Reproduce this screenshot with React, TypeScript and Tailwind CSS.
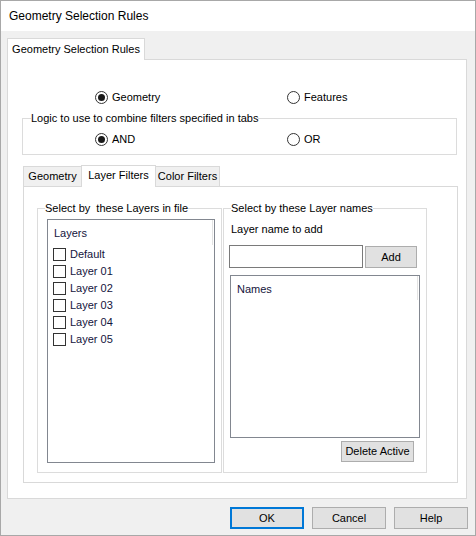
import React from "react";

function Radio({ checked, label }: { checked?: boolean; label: string }) {
  return (
    <div className="flex items-center h-[13px]">
      <svg width="13" height="13" viewBox="0 0 13 13" className="shrink-0">
        <circle cx="6.5" cy="6.5" r="6" fill="#ffffff" stroke="#333333" strokeWidth="1" />
        {checked && <circle cx="6.5" cy="6.5" r="3.5" fill="#1a1a1a" />}
      </svg>
      <span className="ml-[4px] leading-[13px]">{label}</span>
    </div>
  );
}

function Check({ label }: { label: string }) {
  return (
    <div className="flex items-center h-[17px] pl-[5px]">
      <span className="w-[13px] h-[13px] border border-[#333333] bg-white shrink-0" />
      <span className="ml-[4px] leading-[13px] text-[#14143c]">{label}</span>
    </div>
  );
}

function Button({ label, primary, className }: { label: string; primary?: boolean; className?: string }) {
  return (
    <button
      className={
        "flex items-center justify-center bg-[#e1e1e1] leading-[13px] " +
        (primary ? "border-2 border-[#0078d7] " : "border border-[#adadad] ") +
        (className ?? "")
      }
    >
      {label}
    </button>
  );
}

const layers = ["Default", "Layer 01", "Layer 02", "Layer 03", "Layer 04", "Layer 05"];

export default function App() {
  return (
    <div
      className="w-[476px] h-[536px] border border-[#a8a8a8] bg-[#f0f0f0] flex flex-col text-[11px] text-black"
      style={{ fontFamily: '"Liberation Sans", Arial, sans-serif' }}
    >
      {/* title bar */}
      <div className="h-[30px] bg-white flex items-center pl-[8px] text-[12px]">
        Geometry Selection Rules
      </div>

      <div className="flex flex-col pt-[7px] pl-[6px]">
        {/* outer tab strip */}
        <div className="flex h-[21px]">
          <div className="relative z-10 w-[138px] h-[22px] bg-white border-t border-l border-r border-[#d9d9d9] flex items-center justify-center leading-[13px] pb-[1px]">
            Geometry Selection Rules
          </div>
        </div>

        {/* outer tab page */}
        <div className="w-[460px] h-[440px] bg-white border border-[#d9d9d9] flex flex-col pt-[31px]">
          <div className="flex ml-[87px]">
            <div className="w-[192px]">
              <Radio checked label="Geometry" />
            </div>
            <Radio label="Features" />
          </div>

          <fieldset className="ml-[14px] mt-[8px] w-[435px] border border-[#dcdcdc] pb-[8px]">
            <legend className="ml-[8px] leading-[13px]">Logic to use to combine filters specified in tabs</legend>
            <div className="flex ml-[72px] mt-[8px]">
              <div className="w-[192px]">
                <Radio checked label="AND" />
              </div>
              <Radio label="OR" />
            </div>
          </fieldset>

          {/* inner tab strip */}
          <div className="flex items-end h-[21px] mt-[10px] ml-[15px]">
            <div className="w-[59px] h-[20px] bg-[#f0f0f0] border-t border-l border-r border-[#d9d9d9] flex items-center justify-center leading-[13px]">
              Geometry
            </div>
            <div className="relative z-10 -ml-px -mb-px w-[75px] h-[22px] bg-white border-t border-l border-r border-[#d9d9d9] flex items-center justify-center leading-[13px] pb-[2px]">
              Layer Filters
            </div>
            <div className="-ml-px w-[65px] h-[20px] bg-[#f0f0f0] border-t border-l border-r border-[#d9d9d9] flex items-center justify-center leading-[13px]">
              Color Filters
            </div>
          </div>

          {/* inner tab page */}
          <div className="ml-[15px] w-[435px] h-[297px] bg-white border border-[#d9d9d9] flex pt-[15px] pl-[13px]">
            <fieldset className="w-[185px] h-[271px] border border-[#dcdcdc] flex flex-col">
              <legend className="ml-[7px] leading-[13px]">Select by&nbsp; these Layers in file</legend>
              <div className="relative ml-[9px] mt-[4px] w-[168px] h-[244px] border border-[#828790] bg-white pt-[7px]">
                <div className="pl-[6px] leading-[13px] text-[#14143c]">Layers</div>
                <div className="absolute right-[1px] top-0 w-px h-[25px] bg-[#e3e3e3]" />
                <div className="mt-[6px] flex flex-col">
                  {layers.map((l) => (
                    <Check key={l} label={l} />
                  ))}
                </div>
              </div>
            </fieldset>

            <fieldset className="ml-[1px] w-[204px] h-[271px] border border-[#dcdcdc] flex flex-col">
              <legend className="ml-[7px] leading-[13px]">Select by these Layer names</legend>
              <div className="mt-[8px] pl-[7px] leading-[13px]">Layer name to add</div>
              <div className="flex items-end mt-[9px] pl-[5px]">
                <div className="w-[134px] h-[23px] border border-[#7a7a7a] bg-white" />
                <Button label="Add" className="ml-[2px] w-[52px] h-[22px]" />
              </div>
              <div className="relative ml-[6px] mt-[7px] w-[190px] h-[163px] border border-[#828790] bg-white pt-[7px]">
                <div className="pl-[6px] leading-[13px] text-[#14143c]">Names</div>
                <div className="absolute right-[1px] top-0 w-px h-[24px] bg-[#e3e3e3]" />
              </div>
              <div className="flex justify-end mt-[3px] pr-[12px]">
                <Button label="Delete Active" className="w-[73px] h-[21px]" />
              </div>
            </fieldset>
          </div>
        </div>

        {/* dialog buttons */}
        <div className="flex mt-[8px] ml-[223px] gap-[8px]">
          <Button primary label="OK" className="w-[74px] h-[22px]" />
          <Button label="Cancel" className="w-[74px] h-[22px]" />
          <Button label="Help" className="w-[74px] h-[22px]" />
        </div>
      </div>
    </div>
  );
}
